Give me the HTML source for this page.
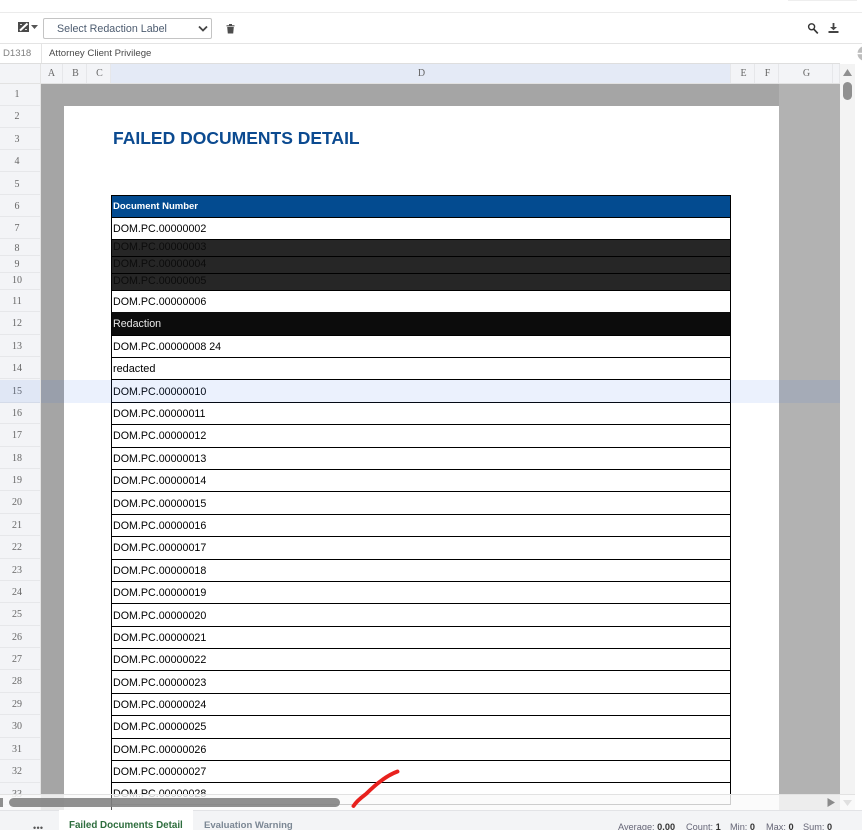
<!DOCTYPE html>
<html><head><meta charset="utf-8">
<style>
html,body{margin:0;padding:0;background:#fff}
#p{position:relative;width:862px;height:830px;overflow:hidden;background:#fff;font-family:"Liberation Sans",sans-serif}
#p div,#p svg{position:absolute}
.l{left:0;width:40px;padding-right:6px;padding-top:1px;text-align:center;font:10px/22px "Liberation Serif",serif;color:#666;height:22px;border-bottom:1px solid #e6e7ea;box-sizing:border-box}
.c{top:64px;height:19px;background:#f3f4f7;border-right:1px solid #e6e7ea;box-sizing:border-box;padding-left:2px;text-align:center;font:10px/19px "Liberation Serif",serif;color:#666}
.r{left:111px;width:620px;box-sizing:border-box;border-left:1px solid #000;border-right:1px solid #000;border-top:1px solid #000;background:#fff;font-size:10.7px;color:#000;padding-left:1px;padding-top:1px;white-space:nowrap}
.d{background:#262626;color:#0c0c0c}
</style></head><body>
<div id="p">
<div style="left:788px;top:0;width:69px;height:1px;background:#eee"></div>
<div style="left:0;top:12px;width:862px;height:1px;background:#ebebeb"></div>
<svg style="left:17px;top:21px" width="22" height="12" viewBox="0 0 22 12"><rect x="1" y="1" width="11" height="10" fill="#4a4a4a"/><path d="M3 9.5L10.5 2.5" stroke="#fff" stroke-width="2"/><path d="M3 3.5h2M8 8.5h2" stroke="#ddd" stroke-width="1"/><path d="M14 4h7l-3.5 4z" fill="#555"/></svg>
<div style="left:43px;top:18px;width:169px;height:21px;box-sizing:border-box;border:1px solid #c4c4c4;border-radius:2px;background:#fff;font-size:10.7px;line-height:21px;color:#4d5c70;padding-left:13px">Select Redaction Label</div>
<svg style="left:198px;top:25px" width="10" height="8" viewBox="0 0 10 8"><path d="M1 1.5L5 5.5L9 1.5" fill="none" stroke="#444" stroke-width="1.8"/></svg>
<svg style="left:226px;top:23px" width="9" height="11" viewBox="0 0 9 11"><path d="M.5 2.200h8v1.200h-8zM3 1h3v1.200H3zM1.200 4h6.600L7.200 10.500H1.800z" fill="#4d4d4d"/></svg>
<svg style="left:807px;top:22px" width="12" height="13" viewBox="0 0 12 13"><circle cx="4.600" cy="4.800" r="3" fill="none" stroke="#333" stroke-width="1.400"/><path d="M6.800 7.200L10.800 11.400" stroke="#333" stroke-width="1.700"/></svg>
<svg style="left:827px;top:22px" width="13" height="12" viewBox="0 0 13 12"><path d="M5.600 1h1.800v4H10L6.500 8.200 3 5h2.600zM1.500 9h10v2h-10z" fill="#444"/></svg>
<div style="left:0;top:43px;width:862px;height:1px;background:#e4e4e4"></div>
<div style="left:41px;top:44px;width:1px;height:20px;background:#e4e4e4"></div>
<div style="left:3px;top:47px;font-size:9.600px;line-height:14px;color:#808080">D1318</div>
<div style="left:49px;top:47px;font-size:9.600px;line-height:14px;color:#4a4a4a">Attorney Client Privilege</div>
<svg style="left:857px;top:45px" width="5" height="18" viewBox="0 0 5 18"><circle cx="8" cy="8.500" r="7.500" fill="#bdbdbd"/><path d="M0 8.500h5" stroke="#fff" stroke-width="1.400"/></svg>
<div style="left:0;top:63px;width:840px;height:1px;background:#dedede"></div>

<div style="left:0;top:64px;width:41px;height:766px;background:#f3f4f7"></div>
<div style="left:0;top:83px;width:840px;height:1px;background:#e2e2e2"></div>
<div class="c" style="left:41px;width:22px;padding-left:0">A</div>
<div class="c" style="left:63px;width:24px">B</div>
<div class="c" style="left:87px;width:24px">C</div>
<div class="c" style="left:111px;width:620px;background:#e4eaf6">D</div>
<div class="c" style="left:731px;width:24px">E</div>
<div class="c" style="left:755px;width:24px">F</div>
<div class="c" style="left:779px;width:54px">G</div>
<div class="c" style="left:833px;width:7px"></div>

<div style="left:41px;top:84px;width:738px;height:22px;background:#a5a5a5"></div>
<div style="left:41px;top:106px;width:23px;height:704px;background:#a5a5a5"></div>
<div style="left:64px;top:106px;width:715px;height:704px;background:#fff"></div>
<div style="left:779px;top:84px;width:61px;height:726px;background:#b2b2b2"></div>
<div style="left:840px;top:64px;width:15px;height:746px;background:#f3f3f3"></div>

<div style="left:113px;top:127px;font-size:17.500px;line-height:22px;font-weight:700;color:#0b4a90;white-space:nowrap">FAILED DOCUMENTS DETAIL</div>

<div class="r" style="top:195px;height:22px;line-height:19px;background:#034b90;color:#fff;font-weight:700;font-size:9.500px">Document Number</div>
<div class="r" style="top:217px;height:22px;line-height:21px">DOM.PC.00000002</div>
<div class="r d" style="top:239px;height:17px;line-height:13px">DOM.PC.00000003</div>
<div class="r d" style="top:256px;height:17px;line-height:13px">DOM.PC.00000004</div>
<div class="r d" style="top:273px;height:17px;line-height:13px">DOM.PC.00000005</div>
<div class="r" style="top:290px;height:22px;line-height:21px">DOM.PC.00000006</div>
<div class="r" style="top:312px;height:23px;line-height:21px;background:#0c0c0c;border-top-color:#0c0c0c;color:#e8e8e8">Redaction</div>
<div class="r" style="top:335px;height:22px;line-height:21px">DOM.PC.00000008 24</div>
<div class="r" style="top:357px;height:22px;line-height:21px;font-size:10.900px">redacted</div>
<div class="r" style="top:379px;height:23px;line-height:22px">DOM.PC.00000010</div>
<div class="r" style="top:402px;height:22px;line-height:21px">DOM.PC.00000011</div>
<div class="r" style="top:424px;height:23px;line-height:21px">DOM.PC.00000012</div>
<div class="r" style="top:447px;height:22px;line-height:21px">DOM.PC.00000013</div>
<div class="r" style="top:469px;height:22px;line-height:21px">DOM.PC.00000014</div>
<div class="r" style="top:491px;height:23px;line-height:22px">DOM.PC.00000015</div>
<div class="r" style="top:514px;height:22px;line-height:21px">DOM.PC.00000016</div>
<div class="r" style="top:536px;height:23px;line-height:21px">DOM.PC.00000017</div>
<div class="r" style="top:559px;height:22px;line-height:21px">DOM.PC.00000018</div>
<div class="r" style="top:581px;height:22px;line-height:21px">DOM.PC.00000019</div>
<div class="r" style="top:603px;height:23px;line-height:22px">DOM.PC.00000020</div>
<div class="r" style="top:626px;height:22px;line-height:21px">DOM.PC.00000021</div>
<div class="r" style="top:648px;height:22px;line-height:21px">DOM.PC.00000022</div>
<div class="r" style="top:670px;height:23px;line-height:22px">DOM.PC.00000023</div>
<div class="r" style="top:693px;height:22px;line-height:21px">DOM.PC.00000024</div>
<div class="r" style="top:715px;height:23px;line-height:21px">DOM.PC.00000025</div>
<div class="r" style="top:738px;height:22px;line-height:21px">DOM.PC.00000026</div>
<div class="r" style="top:760px;height:23px;line-height:21px">DOM.PC.00000027</div>
<div class="r" style="top:782px;height:23px;line-height:21px;border-bottom:1px solid #000">DOM.PC.00000028</div>

<div class="l" style="top:84px;padding-top:0">1</div>
<div class="l" style="top:106px;padding-top:0">2</div>
<div class="l" style="top:128px">3</div>
<div class="l" style="top:150px">4</div>
<div class="l" style="top:173px">5</div>
<div class="l" style="top:195px">6</div>
<div class="l" style="top:217px">7</div>
<div class="l" style="top:239px;height:17px;line-height:17px">8</div>
<div class="l" style="top:256px;height:17px;line-height:15px">9</div>
<div class="l" style="top:273px;height:17px;line-height:13px">10</div>
<div class="l" style="top:290px">11</div>
<div class="l" style="top:312px;height:23px">12</div>
<div class="l" style="top:335px">13</div>
<div class="l" style="top:357px">14</div>
<div class="l" style="top:380px;height:23px">15</div>
<div class="l" style="top:402px">16</div>
<div class="l" style="top:424px;height:23px">17</div>
<div class="l" style="top:447px">18</div>
<div class="l" style="top:469px">19</div>
<div class="l" style="top:491px;height:23px">20</div>
<div class="l" style="top:514px">21</div>
<div class="l" style="top:536px;height:23px">22</div>
<div class="l" style="top:559px">23</div>
<div class="l" style="top:581px">24</div>
<div class="l" style="top:603px;height:23px">25</div>
<div class="l" style="top:626px">26</div>
<div class="l" style="top:648px">27</div>
<div class="l" style="top:670px;height:23px">28</div>
<div class="l" style="top:693px">29</div>
<div class="l" style="top:715px;height:23px">30</div>
<div class="l" style="top:738px">31</div>
<div class="l" style="top:760px;height:23px">32</div>
<div class="l" style="top:783px">33</div>

<div style="left:0;top:380px;width:840px;height:23px;background:rgba(37,99,235,.09)"></div>
<div style="left:40px;top:64px;width:1px;height:746px;background:#e4e4e4"></div>

<svg style="left:842px;top:68px" width="11" height="9" viewBox="0 0 11 9"><path d="M1 8L5.500 1 10 8z" fill="#8f8f8f"/></svg>
<div style="left:843px;top:82px;width:9px;height:18px;border-radius:5px;background:#8f8f8f"></div>

<div style="left:0;top:794px;width:855px;height:16px;background:rgba(250,250,250,.82);border-top:1px solid #e2e2e2;box-sizing:border-box"></div>
<div style="left:111px;top:795px;width:1px;height:15px;background:rgba(0,0,0,.65)"></div>
<div style="left:0;top:798px;width:3px;height:9px;background:#8f8f8f"></div>
<div style="left:9px;top:798px;width:331px;height:9px;border-radius:5px;background:rgba(128,128,128,.88)"></div>
<svg style="left:826px;top:797px" width="10" height="11" viewBox="0 0 10 11"><path d="M1.500 1L9 5.500 1.500 10z" fill="#8a8a8a"/></svg>
<svg style="left:842px;top:799px" width="11" height="8" viewBox="0 0 11 8"><path d="M1 1h9L5.500 7z" fill="#e0e0e0"/></svg>

<svg style="left:345px;top:762px" width="62" height="52" viewBox="0 0 62 52"><path d="M8.500 44C12 38.500 17 35 21 32C29 24 40 14 52.500 9.500" fill="none" stroke="#e8211d" stroke-width="3.900" stroke-linecap="round"/></svg>

<div style="left:0;top:810px;width:862px;height:20px;background:#f3f4f6;border-top:1px solid #e2e3e6;box-sizing:border-box"></div>
<div style="left:59px;top:810px;width:134px;height:20px;background:#fff"></div>
<div style="left:33px;top:823px;font-size:9px;line-height:10px;color:#555;letter-spacing:.3px">•••</div>
<div style="left:69px;top:819px;font-size:9.800px;line-height:14px;font-weight:700;color:#2d6d3d;white-space:nowrap">Failed Documents Detail</div>
<div style="left:204px;top:819px;font-size:9.550px;line-height:14px;font-weight:700;color:#7b8794;white-space:nowrap">Evaluation Warning</div>
<div style="left:618px;top:820px;font-size:9.200px;line-height:14px;color:#667;white-space:nowrap">Average: <b style="color:#333">0.00</b></div>
<div style="left:686px;top:820px;font-size:9.200px;line-height:14px;color:#667;white-space:nowrap">Count: <b style="color:#333">1</b></div>
<div style="left:730px;top:820px;font-size:9.200px;line-height:14px;color:#667;white-space:nowrap">Min: <b style="color:#333">0</b></div>
<div style="left:766px;top:820px;font-size:9.200px;line-height:14px;color:#667;white-space:nowrap">Max: <b style="color:#333">0</b></div>
<div style="left:803px;top:820px;font-size:9.200px;line-height:14px;color:#667;white-space:nowrap">Sum: <b style="color:#333">0</b></div>
</div>
</body></html>
